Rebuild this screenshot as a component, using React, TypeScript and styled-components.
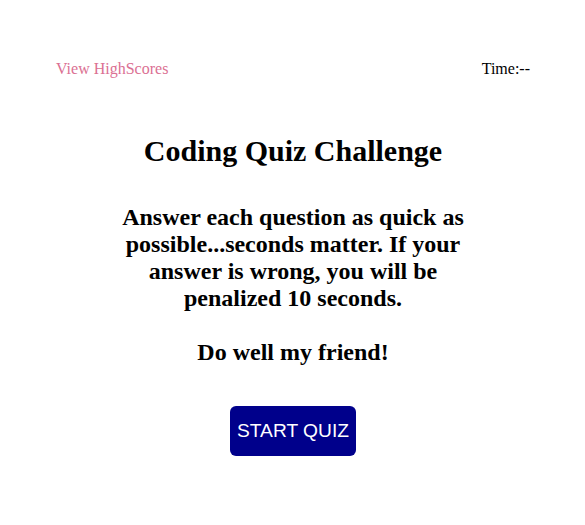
import React from "react";
import styled, { createGlobalStyle } from "styled-components";

const GlobalStyle = createGlobalStyle`
  *, *::before, *::after { box-sizing: border-box; }
  body {
    margin: 0;
    background: #ffffff;
    color: #000000;
    font-family: "Liberation Serif", "Times New Roman", serif;
    font-size: 16px;
  }
`;

const Page = styled.div`
  display: flex;
  flex-direction: column;
  padding: 60px 55px 0 56px;
`;

const TopBar = styled.header`
  display: flex;
  justify-content: space-between;
  line-height: 18px;
`;

const ScoresLink = styled.a`
  color: palevioletred;
  text-decoration: none;
`;

const Intro = styled.main`
  display: flex;
  flex-direction: column;
  align-items: center;
  align-self: center;
  width: 350px;
  text-align: center;
`;

const Title = styled.h1`
  margin: 56px 0 0;
  font-size: 30px;
  line-height: 34px;
`;

const Instructions = styled.h2`
  margin: 36px 0 0;
  font-size: 24px;
  line-height: 27px;
`;

const StartButton = styled.button`
  width: 126px;
  height: 50px;
  margin-top: 40px;
  padding: 0;
  border: 0;
  border-radius: 6px;
  background: darkblue;
  color: #ffffff;
  font-family: "Liberation Sans", Arial, sans-serif;
  font-size: 19.2px;
  white-space: nowrap;
  cursor: pointer;
`;

export default function App() {
  return (
    <>
      <GlobalStyle />
      <Page>
        <TopBar>
          <ScoresLink href="#">View HighScores</ScoresLink>
          <span>Time:--</span>
        </TopBar>
        <Intro>
          <Title>Coding Quiz Challenge</Title>
          <Instructions>
            Answer each question as quick as possible...seconds matter. If your
            answer is wrong, you will be penalized 10 seconds.
            <br />
            <br />
            Do well my friend!
          </Instructions>
          <StartButton type="button">START QUIZ</StartButton>
        </Intro>
      </Page>
    </>
  );
}
